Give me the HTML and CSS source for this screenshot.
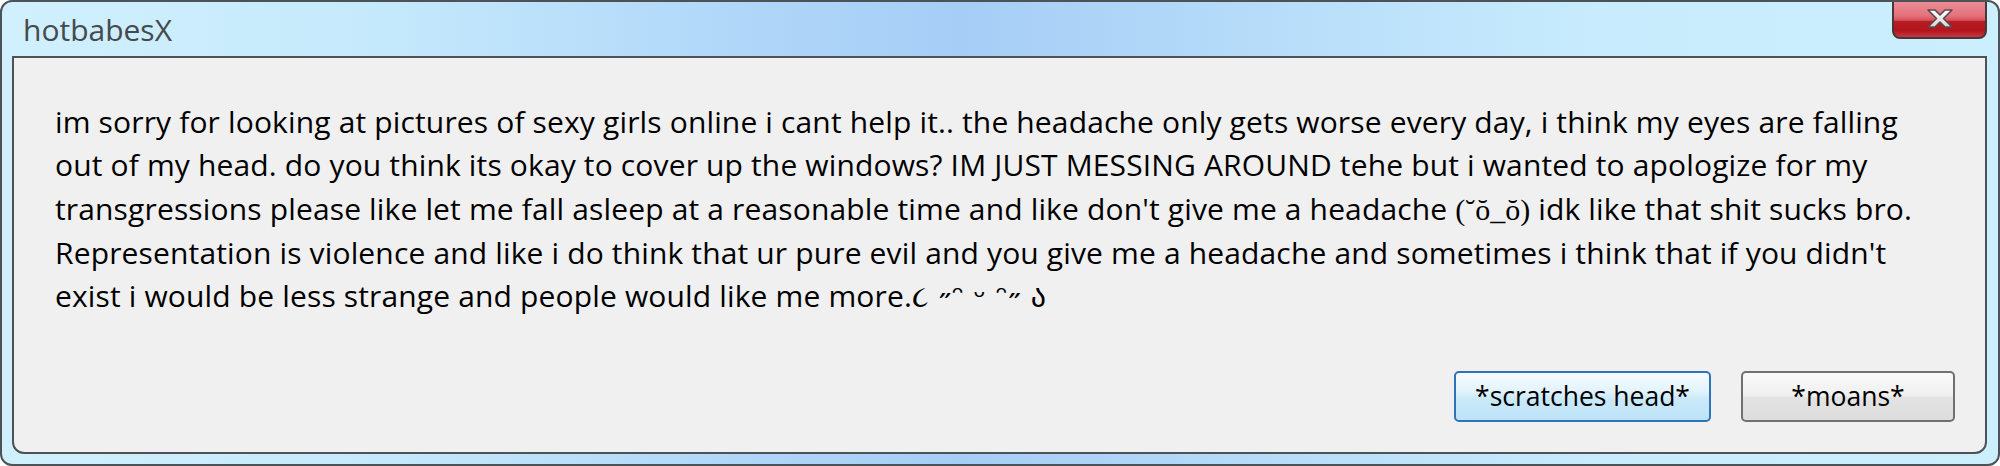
FILE: index.html
```html
<!DOCTYPE html>
<html lang="en">
<head>
<meta charset="utf-8">
<title>hotbabesX</title>
<link rel="stylesheet" href="styles.css">
</head>
<body>
<div class="window">
  <div class="titlebar">
    <span class="title">hotbabesX</span>
    <button class="close" aria-label="Close">
      <svg class="close-x" viewBox="0 0 26 19" width="26" height="19">
        <defs>
          <linearGradient id="xg" x1="0" y1="0" x2="0" y2="1">
            <stop offset="0" stop-color="#ffffff"/>
            <stop offset="1" stop-color="#d6d6d6"/>
          </linearGradient>
        </defs>
        <polygon points="1,1 8,1 13,6 18,1 25,1 16.5,9.5 25,18 18,18 13,13 8,18 1,18 9.5,9.5" fill="url(#xg)" stroke="#5a4a4c" stroke-width="1.6" stroke-linejoin="round"/>
      </svg>
    </button>
  </div>
  <div class="panel">
    <p class="message">im sorry for looking at pictures of sexy girls online i cant help it.. the headache only gets worse every day, i think my eyes are falling<br>out of my head. do you think its okay to cover up the windows? IM JUST MESSING AROUND tehe but i wanted to apologize for my<br>transgressions please like let me fall asleep at a reasonable time and like don't give me a headache <span class="kao">(˘ŏ_ŏ)</span> idk like that shit sucks bro.<br>Representation is violence and like i do think that ur pure evil and you give me a headache and sometimes i think that if you didn't<br>exist i would be less strange and people would like me more.<span class="emo">૮ ˶ᵔ ᵕ ᵔ˶ ა</span></p>
    <div class="actions">
      <button class="btn btn-default">*scratches head*</button>
      <button class="btn">*moans*</button>
    </div>
  </div>
</div>
</body>
</html>
```
FILE: styles.css
```css
html, body {
  margin: 0;
  padding: 0;
  background: #ffffff;
}

.window {
  box-sizing: border-box;
  width: 2000px;
  height: 466px;
  border: 2px solid #4d5256;
  border-radius: 12px;
  background: linear-gradient(90deg, #d0f0fd 0%, #c6eafc 18%, #b2d9f9 35%, #a6cdf6 48%, #b5dbf9 62%, #c8ecfd 80%, #cbeffd 100%);
  display: flex;
  flex-direction: column;
  overflow: hidden;
}

.titlebar {
  height: 54px;
  flex: none;
  display: flex;
  justify-content: space-between;
  align-items: flex-start;
  padding-left: 21px;
}

.title {
  margin-top: 7px;
  font-family: "Open Sans", "Noto Sans", sans-serif;
  font-size: 30px;
  line-height: 41px;
  color: #454a4e;
}

.close {
  box-sizing: border-box;
  width: 95px;
  height: 39px;
  margin-top: -2px;
  margin-right: 11px;
  padding: 0;
  border: 2px solid #45383a;
  border-radius: 0 0 8px 8px;
  background: linear-gradient(180deg, #eb8d96 0%, #e3717b 40%, #d9525c 52%, #b81a22 56%, #b3151d 82%, #c63840 100%);
  display: flex;
  align-items: center;
  justify-content: center;
  cursor: default;
}

.close-x {
  display: block;
  margin-top: -3px;
}

.panel {
  flex: 1;
  margin: 0 11px 10px 10px;
  border: 2px solid #4d5256;
  border-radius: 0 0 12px 12px;
  background: #f0f0f0;
  display: flex;
  flex-direction: column;
}

.message {
  margin: 0;
  padding: 42px 0 0 41px;
  font-family: "Open Sans", "Noto Sans", sans-serif;
  font-size: 30px;
  letter-spacing: 0.15px;
  line-height: 43.3px;
  color: #000000;
  white-space: nowrap;
}

.kao {
  font-family: "Liberation Serif", "DejaVu Serif", serif;
  letter-spacing: 0;
}

.emo {
  font-family: "DejaVu Sans", "Noto Sans", sans-serif;
  font-size: 30px;
  letter-spacing: 0;
}

.actions {
  margin-top: auto;
  display: flex;
  justify-content: flex-end;
  gap: 30px;
  padding: 0 30px 30px 0;
}

.btn {
  box-sizing: border-box;
  height: 51px;
  width: 214px;
  padding: 0;
  border: 2px solid #707070;
  border-radius: 5px;
  background: linear-gradient(180deg, #fafafa 0%, #efefef 48%, #e3e3e3 52%, #dcdcdc 100%);
  font-family: "Open Sans", "Noto Sans", sans-serif;
  font-size: 26.5px;
  line-height: 1;
  color: #000000;
  cursor: default;
}

.btn-default {
  width: 257px;
  border-color: #2f73b8;
  background: linear-gradient(180deg, #f5fbfe 0%, #e2f3fc 40%, #c9e9f9 55%, #bde3f8 100%);
}
```
